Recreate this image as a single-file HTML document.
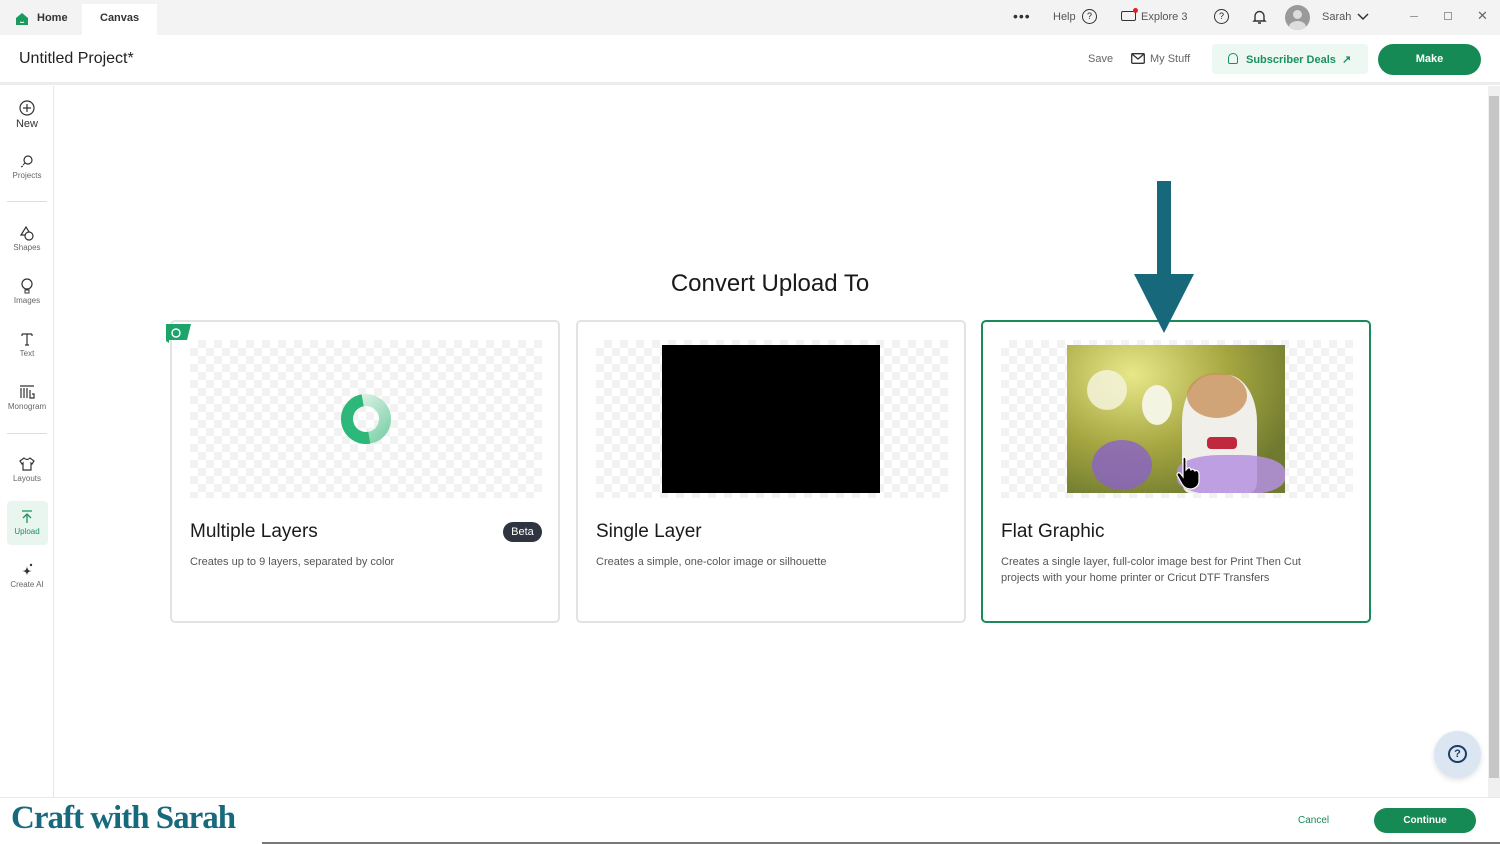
<!DOCTYPE html>
<html><head><meta charset="utf-8"><style>
*{margin:0;padding:0;box-sizing:border-box}
body{width:1500px;height:844px;overflow:hidden;background:#fff;font-family:"Liberation Sans",sans-serif;position:relative;color:#222}
.abs{position:absolute}
.top{left:0;top:0;width:1500px;height:35px;background:#f3f3f3}
.hdr{left:0;top:35px;width:1500px;height:50px;background:#fff;border-bottom:3px solid #ececec}
.side{left:0;top:86px;width:54px;height:712px;border-right:1px solid #e6e6e6;background:#fff}
.si{position:absolute;left:0;width:54px;text-align:center;font-size:8px;color:#666}
.si svg{display:block;margin:0 auto 2px}
.card{position:absolute;top:320px;width:390px;height:303px;border:2px solid #e3e3e3;border-radius:5px;background:#fff}
.chk{position:absolute;left:18px;top:18px;width:352px;height:158px;background-color:#fff;background-image:linear-gradient(45deg,#f2f2f2 25%,transparent 25%,transparent 75%,#f2f2f2 75%),linear-gradient(45deg,#f2f2f2 25%,transparent 25%,transparent 75%,#f2f2f2 75%);background-size:16px 16px;background-position:0 0,8px 8px}
.ct{position:absolute;left:18px;top:199px;font-size:19px;color:#1a1a1a}
.cd{position:absolute;left:18px;top:232px;font-size:11px;color:#555;line-height:16px}
</style></head><body>
<div class="abs top"></div>
<div class="abs" style="left:82px;top:4px;width:75px;height:31px;background:#fff"></div>
<svg class="abs" style="left:15px;top:12px" width="14" height="14" viewBox="0 0 14 14"><path d="M1 6 L7 1 L13 6 V13 H1Z" fill="#1a9a5c"/><path d="M5 10 Q7 11 9 10" stroke="#fff" fill="none"/></svg>
<div class="abs" style="left:37px;top:12px;font-size:11px;font-weight:bold;color:#333">Home</div>
<div class="abs" style="left:100px;top:12px;font-size:11px;font-weight:bold;color:#333">Canvas</div>
<div class="abs" style="left:1013px;top:8px;font-size:14px;color:#333;letter-spacing:1px">•••</div>
<div class="abs" style="left:1053px;top:11px;font-size:11px;color:#555">Help</div>
<div class="abs" style="left:1082px;top:9px;width:15px;height:15px;border:1.5px solid #333;border-radius:50%;font-size:9px;text-align:center;line-height:12px">?</div>
<div class="abs" style="left:1121px;top:11px;width:15px;height:10px;border:1.5px solid #333;border-radius:2px"></div>
<div class="abs" style="left:1133px;top:8px;width:5px;height:5px;background:#d22;border-radius:50%"></div>
<div class="abs" style="left:1141px;top:11px;font-size:11px;color:#555">Explore 3</div>
<div class="abs" style="left:1214px;top:9px;width:15px;height:15px;border:1.5px solid #333;border-radius:50%;font-size:9px;text-align:center;line-height:12px">?</div>
<svg class="abs" style="left:1252px;top:9px" width="15" height="16" viewBox="0 0 15 16"><path d="M3 11 V7 A4.5 4.5 0 0 1 12 7 V11 L13 12 H2Z M6 14 H9" stroke="#333" stroke-width="1.4" fill="none"/></svg>
<div class="abs" style="left:1285px;top:5px;width:25px;height:25px;border-radius:50%;background:#9a9a9a;overflow:hidden"><div class="abs" style="left:8px;top:5px;width:9px;height:9px;border-radius:50%;background:#ddd"></div><div class="abs" style="left:4px;top:16px;width:17px;height:12px;border-radius:50%;background:#ddd"></div></div>
<div class="abs" style="left:1322px;top:11px;font-size:11px;color:#555">Sarah</div>
<svg class="abs" style="left:1357px;top:13px" width="12" height="8"><path d="M1 1 L6 6 L11 1" stroke="#333" stroke-width="1.5" fill="none"/></svg>
<div class="abs" style="left:1410px;top:16px;width:8px;height:1px;background:#999"></div>
<div class="abs" style="left:1444px;top:12px;width:8px;height:8px;border:1px solid #999"></div>
<div class="abs" style="left:1477px;top:8px;font-size:13px;color:#666">✕</div>

<div class="abs hdr"></div>
<div class="abs" style="left:19px;top:50px;font-size:16px;color:#222">Untitled Project*</div>
<div class="abs" style="left:1088px;top:53px;font-size:11px;color:#666">Save</div>
<svg class="abs" style="left:1131px;top:53px" width="14" height="11"><rect x="0.7" y="0.7" width="12.6" height="9.6" rx="1" stroke="#333" stroke-width="1.3" fill="none"/><path d="M1 1 L7 6 L13 1" stroke="#333" stroke-width="1.3" fill="none"/></svg>
<div class="abs" style="left:1150px;top:53px;font-size:11px;color:#666">My Stuff</div>
<div class="abs" style="left:1212px;top:44px;width:156px;height:30px;background:#edf8f2;border-radius:4px"></div>
<div class="abs" style="left:1228px;top:53px;width:10px;height:11px;border:1.5px solid #1a9060;border-radius:5px 5px 2px 2px"></div>
<div class="abs" style="left:1246px;top:53px;font-size:11px;font-weight:bold;color:#1a9060">Subscriber Deals &nbsp;↗</div>
<div class="abs" style="left:1378px;top:44px;width:103px;height:31px;background:#168a55;border-radius:16px;color:#fff;font-size:11px;font-weight:bold;text-align:center;line-height:31px">Make</div>

<div class="abs side"></div>
<div class="si" style="top:100px"><svg width="16" height="16"><circle cx="8" cy="8" r="7" stroke="#333" fill="none" stroke-width="1.2"/><path d="M8 4V12M4 8H12" stroke="#333" stroke-width="1.2"/></svg><span style="font-size:11px;color:#333">New</span></div>
<div class="si" style="top:153px"><svg width="16" height="16"><circle cx="9" cy="7" r="4" stroke="#333" fill="none" stroke-width="1.2"/><path d="M4 12 L6 10 M2 14 L4 13" stroke="#333"/></svg>Projects</div>
<div class="abs" style="left:7px;top:201px;width:40px;height:1px;background:#ddd"></div>
<div class="si" style="top:225px"><svg width="16" height="16"><path d="M2 10 L7 2 L12 10Z" stroke="#333" fill="none" stroke-width="1.2"/><circle cx="10" cy="11" r="4" stroke="#333" fill="#fff" stroke-width="1.2"/></svg>Shapes</div>
<div class="si" style="top:278px"><svg width="16" height="16"><ellipse cx="8" cy="6" rx="5" ry="5" stroke="#333" fill="none" stroke-width="1.2"/><rect x="6" y="12" width="4" height="3" stroke="#333" fill="none"/></svg>Images</div>
<div class="si" style="top:331px"><svg width="16" height="16"><path d="M3 3H13M8 3V14M6 14H10M3 3V5M13 3V5" stroke="#333" stroke-width="1.2" fill="none"/></svg>Text</div>
<div class="si" style="top:384px"><svg width="16" height="16"><path d="M1 2H15M2 4V14M5 4V14M8 4V14M11 6V14H15V10H13" stroke="#333" stroke-width="1.2" fill="none"/></svg>Monogram</div>
<div class="abs" style="left:7px;top:433px;width:40px;height:1px;background:#ddd"></div>
<div class="si" style="top:456px"><svg width="16" height="16"><path d="M5 2 L1 5 L3 8 L4 7 V14 H12 V7 L13 8 L15 5 L11 2 Q8 5 5 2Z" stroke="#333" stroke-width="1.2" fill="none"/></svg>Layouts</div>
<div class="abs" style="left:7px;top:501px;width:41px;height:44px;background:#e9f6ef;border-radius:4px"></div>
<div class="si" style="top:509px;color:#1a9060"><svg width="16" height="16"><path d="M3 2H13M8 14V5M4 9L8 5L12 9" stroke="#1a9060" stroke-width="1.3" fill="none"/></svg>Upload</div>
<div class="si" style="top:562px"><svg width="16" height="16"><path d="M8 4 Q8 9 3 9 Q8 9 8 14 Q8 9 13 9 Q8 9 8 4Z" fill="#333"/><circle cx="12" cy="3" r="1.2" fill="#333"/></svg>Create AI</div>

<div class="abs" style="left:0;top:270px;width:1540px;text-align:center;font-size:24px;color:#1a1a1a">Convert Upload To</div>

<div class="card" style="left:170px">
<div class="chk"><svg style="position:absolute;left:150px;top:53px" width="52" height="52" viewBox="0 0 52 52"><defs><linearGradient id="g" x1="0" y1="0" x2="1" y2="1"><stop offset="0" stop-color="#e8f5ef"/><stop offset="1" stop-color="#7fd1a8"/></linearGradient></defs><circle cx="26" cy="26" r="19" stroke="url(#g)" stroke-width="12" fill="none"/><path d="M26 7 A19 19 0 0 0 26 45" stroke="#2db87a" stroke-width="12" fill="none" transform="rotate(-10 26 26)"/></svg></div>
<div class="ct">Multiple Layers</div>
<div style="position:absolute;left:331px;top:200px;width:39px;height:20px;border-radius:10px;background:#2e3440;color:#fff;font-size:11px;text-align:center;line-height:20px">Beta</div>
<div class="cd">Creates up to 9 layers, separated by color</div>
</div>
<svg class="abs" style="left:166px;top:324px" width="25" height="19"><path d="M0 0H25L21 16H3V19L0 17Z" fill="#1da46a"/><circle cx="10" cy="9" r="4" stroke="#fff" fill="none" stroke-width="1.4"/></svg>

<div class="card" style="left:576px">
<div class="chk"><div style="position:absolute;left:66px;top:5px;width:218px;height:148px;background:#000"></div></div>
<div class="ct">Single Layer</div>
<div class="cd">Creates a simple, one-color image or silhouette</div>
</div>

<div class="card" style="left:981px;border-color:#1a8a5a">
<div class="chk"><div style="position:absolute;left:66px;top:5px;width:218px;height:148px;overflow:hidden;background:radial-gradient(ellipse at 30% 20%,#e8e88a,#a5a640 45%,#6f7a30 80%)">
<div style="position:absolute;left:20px;top:25px;width:40px;height:40px;border-radius:50%;background:#f3f3da;opacity:.85"></div>
<div style="position:absolute;left:75px;top:40px;width:30px;height:40px;border-radius:50%;background:#f4f4e2"></div>
<div style="position:absolute;left:115px;top:30px;width:75px;height:118px;border-radius:40% 40% 10% 10%;background:#f1efe9"></div>
<div style="position:absolute;left:120px;top:28px;width:60px;height:45px;border-radius:50%;background:#c9915a;opacity:.8"></div>
<div style="position:absolute;left:140px;top:92px;width:30px;height:12px;background:#c0283e;border-radius:4px"></div>
<div style="position:absolute;left:25px;top:95px;width:60px;height:50px;border-radius:50%;background:#8a62c9;opacity:.8"></div>
<div style="position:absolute;left:110px;top:110px;width:108px;height:40px;border-radius:40%;background:#b590e0;opacity:.85"></div>
</div></div>
<div class="ct">Flat Graphic</div>
<div class="cd">Creates a single layer, full-color image best for Print Then Cut<br>projects with your home printer or Cricut DTF Transfers</div>
</div>
<svg class="abs" style="left:1134px;top:181px" width="60" height="153"><rect x="23" y="0" width="14" height="95" fill="#17687a"/><path d="M0 93H60L30 152Z" fill="#17687a"/></svg>
<svg class="abs" style="left:1176px;top:456px" width="26" height="34" viewBox="0 0 26 34"><path d="M7 2 Q9 0 10 3 V14 L12 12 Q14 11 15 14 Q17 12 19 15 Q21 13 23 17 V26 Q22 32 15 33 Q9 33 6 28 L1 19 Q1 16 4 17 L7 21Z" fill="#000" stroke="#fff" stroke-width="1.2"/></svg>

<div class="abs" style="left:1488px;top:86px;width:12px;height:712px;background:#f0f0f0"></div>
<div class="abs" style="left:1489px;top:96px;width:10px;height:682px;background:#c6c6c6"></div>
<div class="abs" style="left:1434px;top:731px;width:47px;height:47px;border-radius:50%;background:#dbe6f2;box-shadow:0 2px 6px rgba(0,0,0,.12)"></div>
<div class="abs" style="left:1448px;top:745px;width:19px;height:18px;border:2px solid #1c3e66;border-radius:50%;font-size:11px;color:#1c3e66;text-align:center;line-height:14px;font-weight:bold">?</div>

<div class="abs" style="left:0;top:797px;width:1500px;height:47px;background:#fff;border-top:1px solid #e8e8e8"></div>
<div class="abs" style="left:262px;top:842px;width:1238px;height:2px;background:#777"></div>
<div class="abs" style="left:11px;top:800px;font-family:'Liberation Serif',serif;font-size:33px;font-weight:bold;color:#176a7c;letter-spacing:-1px">Craft with Sarah</div>
<div class="abs" style="left:1298px;top:815px;font-size:10px;color:#1a8a5a">Cancel</div>
<div class="abs" style="left:1374px;top:808px;width:102px;height:25px;border-radius:13px;background:#168a55;color:#fff;font-size:10px;font-weight:bold;text-align:center;line-height:25px">Continue</div>
</body></html>
